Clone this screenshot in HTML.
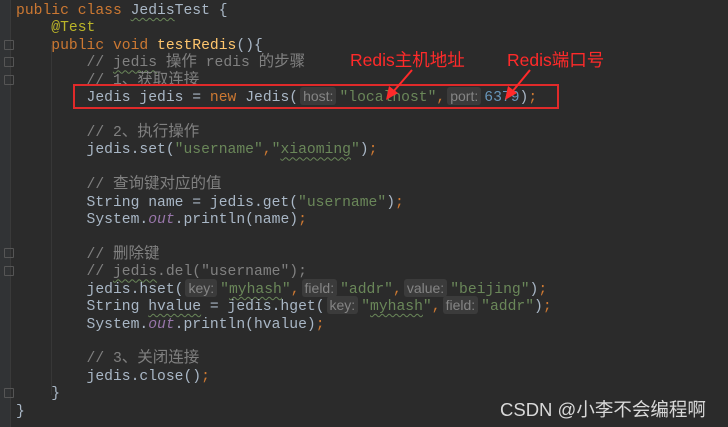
<!DOCTYPE html>
<html><head><meta charset="utf-8"><style>
html,body{margin:0;width:728px;height:427px;overflow:hidden}
body{background:#2b2b2b;position:relative;font-family:"Liberation Mono","Noto Sans CJK SC",monospace;}
.g{position:absolute;left:0;top:0;width:10px;height:427px;background:#313335;border-right:1px solid #3a3a3a}
.code{position:absolute;left:16px;top:3px;font-size:14.7px;line-height:17.43px;color:#a9b7c6;white-space:normal}
.code>div{height:17.43px;overflow:visible;white-space:pre}
.k{color:#cc7832}.s{color:#6a8759}.c{color:#808080}.a{color:#bbb529}.m{color:#ffc66d}.n{color:#6897bb}.f{color:#9876aa;font-style:italic}
.cj{font-size:15.5px;line-height:0}
.u{text-decoration:underline wavy #6a8759;text-decoration-thickness:1px;text-underline-offset:3px}
.h{display:inline;font-family:"Liberation Sans",sans-serif;font-size:14px;line-height:0;background:#3b3b3b;color:#858585;padding:1px 3px 1px 3px;border-radius:3px;margin:0 3px 0 2px}
.gd{position:absolute;width:1px;background:#373737}
.fold{position:absolute;left:4px;width:8px;height:8px;border:1px solid #555;border-radius:1px}
.box{position:absolute;left:73px;top:84px;width:482px;height:21px;border:2px solid #e02a2a}
.lbl{position:absolute;color:#ff2a2a;font-family:"Liberation Sans","Noto Sans CJK SC",sans-serif;font-size:17.5px}
.wm{position:absolute;left:500px;top:396px;color:#d8d8d8;font-family:"Liberation Sans","Noto Sans CJK SC",sans-serif;font-size:18.5px}
</style></head><body>
<div class="g"></div>
<div class="gd" style="left:51px;top:45px;height:350px"></div>
<div class="fold" style="top:40px"></div>
<div class="fold" style="top:57px"></div>
<div class="fold" style="top:75px"></div>
<div class="fold" style="top:248px"></div>
<div class="fold" style="top:266px"></div>
<div class="fold" style="top:388px"></div>
<div class="code"><div><span class="k">public class </span><span class="u">Jedis</span>Test {</div><div>    <span class="a">@Test</span></div><div>    <span class="k">public void </span><span class="m">testRedis</span>(){</div><div>        <span class="c">// <span class="u">jedis</span> <span class="cj">操作</span> redis <span class="cj">的步骤</span></span></div><div>        <span class="c">// 1<span class="cj">、获取连接</span></span></div><div>        Jedis jedis = <span class="k">new </span>Jedis(<span class="h">host:</span><span class="s">"localhost"</span><span class="k">,</span><span class="h">port:</span><span class="n">6379</span>)<span class="k">;</span></div><div> </div><div>        <span class="c">// 2<span class="cj">、执行操作</span></span></div><div>        jedis.set(<span class="s">"username"</span><span class="k">,</span><span class="s">"<span class="u">xiaoming</span>"</span>)<span class="k">;</span></div><div> </div><div>        <span class="c">// <span class="cj">查询键对应的值</span></span></div><div>        String name = jedis.get(<span class="s">"username"</span>)<span class="k">;</span></div><div>        System.<span class="f">out</span>.println(name)<span class="k">;</span></div><div> </div><div>        <span class="c">// <span class="cj">删除键</span></span></div><div>        <span class="c">// <span class="u">jedis</span>.del("username");</span></div><div>        jedis.hset(<span class="h">key:</span><span class="s">"<span class="u">myhash</span>"</span><span class="k">,</span><span class="h">field:</span><span class="s">"addr"</span><span class="k">,</span><span class="h">value:</span><span class="s">"beijing"</span>)<span class="k">;</span></div><div>        String <span class="u">hvalue</span> = jedis.hget(<span class="h">key:</span><span class="s">"<span class="u">myhash</span>"</span><span class="k">,</span><span class="h">field:</span><span class="s">"addr"</span>)<span class="k">;</span></div><div>        System.<span class="f">out</span>.println(hvalue)<span class="k">;</span></div><div> </div><div>        <span class="c">// 3<span class="cj">、关闭连接</span></span></div><div>        jedis.close()<span class="k">;</span></div><div>    }</div><div>}</div></div>
<div class="box"></div>
<div class="lbl" style="left:350px;top:47px">Redis主机地址</div>
<div class="lbl" style="left:507px;top:47px">Redis端口号</div>
<svg style="position:absolute;left:0;top:0" width="728" height="427">
<line x1="412" y1="70" x2="393" y2="92" stroke="#ff2a2a" stroke-width="2"/>
<polygon points="386,100 389,86 398,93" fill="#ff2a2a"/>
<line x1="530" y1="70" x2="512" y2="92" stroke="#ff2a2a" stroke-width="2"/>
<polygon points="505,100 508,86 517,93" fill="#ff2a2a"/>
</svg>
<div class="wm">CSDN @小李不会编程啊</div>
</body></html>
